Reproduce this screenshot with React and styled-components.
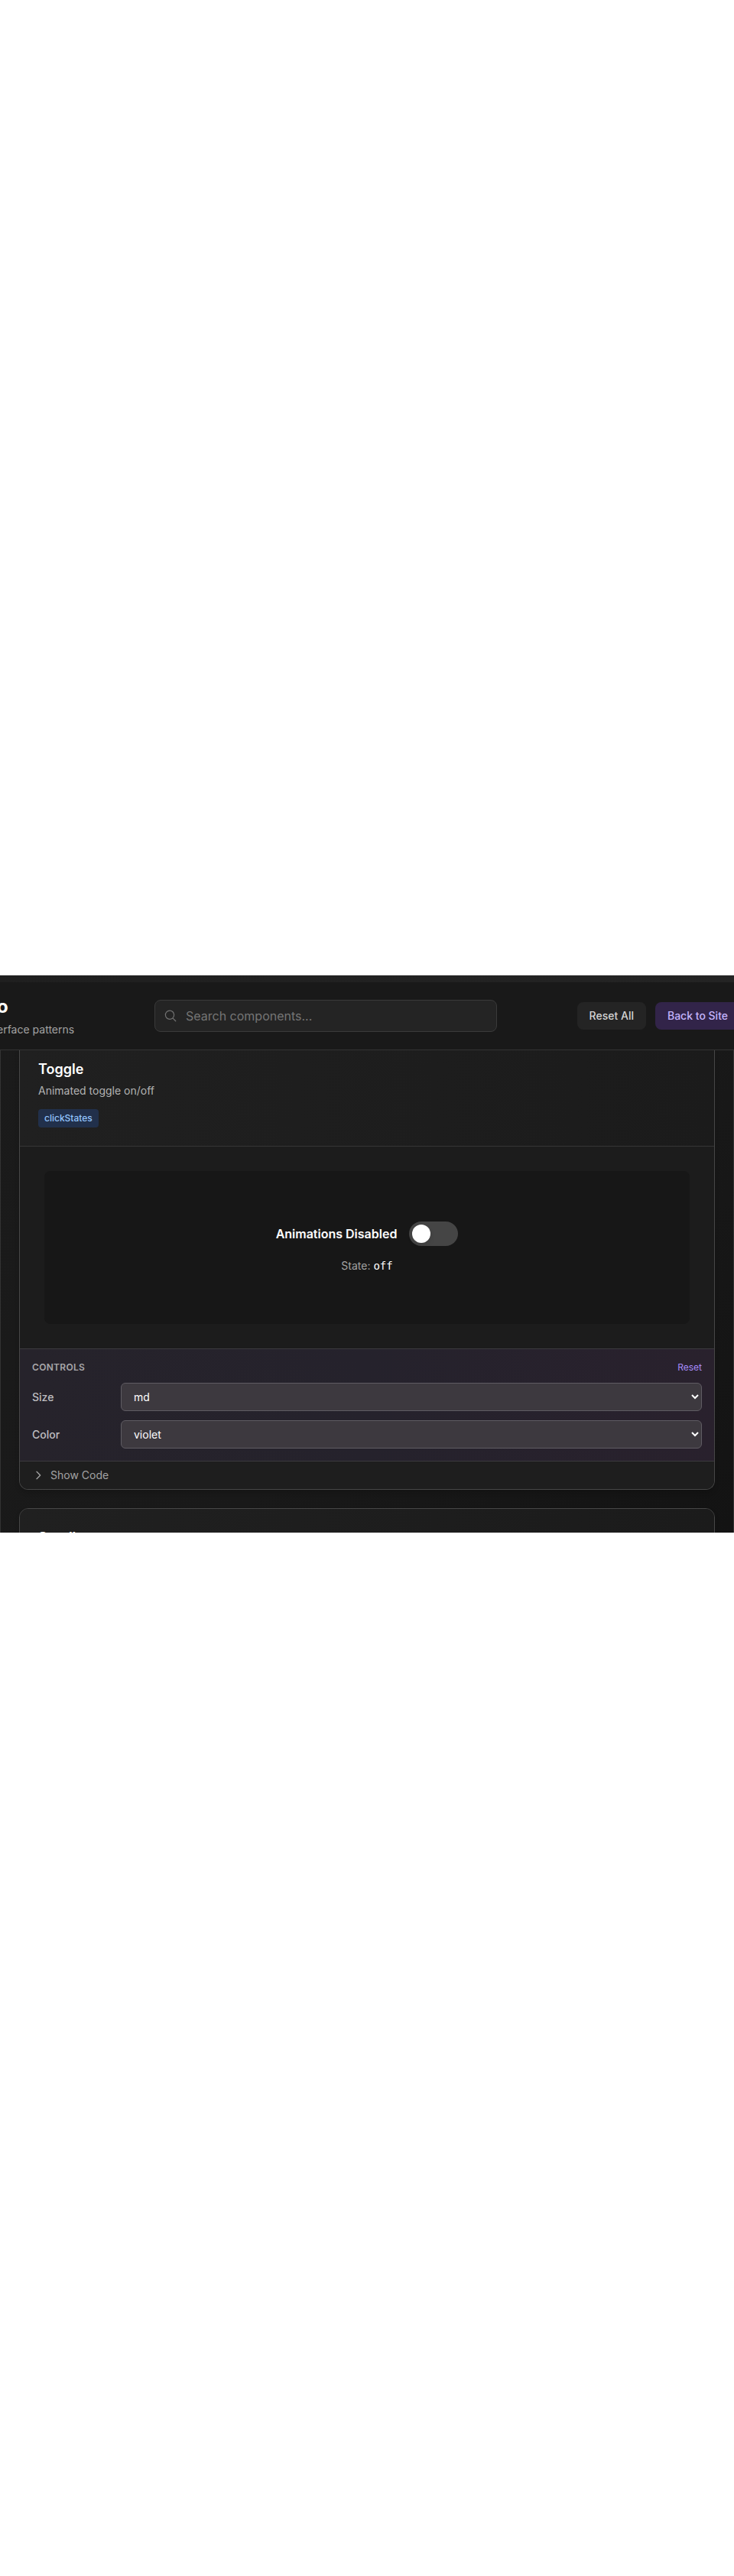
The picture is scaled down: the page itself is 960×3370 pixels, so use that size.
import React from "react";
import styled, { createGlobalStyle } from "styled-components";

const Global = createGlobalStyle`
  *, *::before, *::after { box-sizing: border-box; }
  html { background: #fff; }
  body { margin: 0; font-family: Inter, "Liberation Sans", sans-serif; font-size: 14px; line-height: 20px; color: #fff; }
  h1, h2, h3, p { margin: 0; }
  button, input, select { font-family: inherit; }
`;

const Page = styled.div`
  padding: 1276px 0 1365px;
`;

const Frame = styled.div`
  background: linear-gradient(135deg, #1b1b1b, #191919 60%, #131313);
`;

const Strip = styled.div`
  height: 9px;
  background: linear-gradient(90deg, #1f1f1f, #242424);
`;

const Header = styled.header`
  display: flex;
  align-items: center;
  height: 89px;
  overflow: hidden;
  background: #191919;
  border-bottom: 1px solid #333;
`;

const Brand = styled.div`
  flex: none;
  width: 206px;
  margin-left: -4px;
  white-space: nowrap;
`;

const BrandTitle = styled.h1`
  font-size: 24px;
  line-height: 32px;
  font-weight: 700;
`;

const BrandText = styled.p`
  margin-top: 4px;
  color: #a3a3a3;
`;

const Search = styled.label`
  position: relative;
  flex: 0 1 448px;
  color: #737373;
  svg { position: absolute; left: 12px; top: 12px; }
`;

const SearchInput = styled.input`
  display: block;
  width: 100%;
  height: 42px;
  padding: 0 16px 0 40px;
  border: 1px solid #3a3a3a;
  border-radius: 8px;
  background: #242424;
  color: #fff;
  font-size: 16px;
  &::placeholder { color: #757575; opacity: 1; }
`;

const Actions = styled.div`
  display: flex;
  flex: none;
  gap: 12px;
  margin-left: auto;
  margin-right: -8px;
`;

const Action = styled.button`
  height: 36px;
  padding: 0 16px;
  border: 0;
  border-radius: 8px;
  background: ${(p) => (p.$accent ? "#322449" : "#242424")};
  color: ${(p) => (p.$accent ? "#c4b5fd" : "#d4d4d4")};
  font-size: 14px;
  line-height: 20px;
  font-weight: 500;
  white-space: nowrap;
`;

const ActionLink = styled(Action)`
  display: block;
  padding: 8px 16px;
  text-decoration: none;
`;

const Main = styled.main`
  display: flex;
  flex-direction: column;
  gap: 24px;
  height: 631px;
  overflow: hidden;
  padding: 0 24px;
  border: solid #333;
  border-width: 0 1px;
`;

const Card = styled.article`
  flex: none;
  overflow: hidden;
  border: 1px solid #474747;
  border-top-width: ${(p) => (p.$cut ? "0" : "1px")};
  border-radius: ${(p) => (p.$cut ? "0 0 12px 12px" : "12px")};
  background: #1c1c1c;
  box-shadow: 0 4px 6px rgba(0, 0, 0, 0.15);
`;

const CardHead = styled.header`
  padding: ${(p) => (p.$cut ? "11px" : "24px")} 24px 24px;
  background: linear-gradient(90deg, #202020, #1b1b1b);
  border-bottom: 1px solid #363636;
`;

const CardTitle = styled.h2`
  font-size: 18px;
  line-height: 28px;
  font-weight: 600;
`;

const CardText = styled.p`
  margin-top: 4px;
  color: #b3b3b3;
`;

const Tag = styled.span`
  display: block;
  width: fit-content;
  margin-top: 14px;
  padding: 4px 8px;
  border-radius: 4px;
  background: #21304b;
  color: #93c5fd;
  font-size: 12px;
  line-height: 16px;
  font-weight: 500;
`;

const Preview = styled.section`
  padding: 32px;
`;

const Stage = styled.div`
  display: flex;
  flex-direction: column;
  align-items: center;
  justify-content: center;
  gap: 16px;
  height: 200px;
  border-radius: 8px;
  background: #171717;
`;

const SwitchRow = styled.label`
  display: flex;
  align-items: center;
  gap: 16px;
  font-size: 16px;
  line-height: 24px;
  font-weight: 600;
`;

const Switch = styled.input`
  appearance: none;
  display: flex;
  align-items: center;
  width: 64px;
  height: 32px;
  margin: 0;
  padding: 4px;
  border-radius: 16px;
  background: #454545;
  &::before {
    content: "";
    width: 24px;
    height: 24px;
    border-radius: 50%;
    background: #fff;
    box-shadow: 0 4px 6px rgba(0, 0, 0, 0.1);
  }
`;

const StateText = styled.p`
  color: #a3a3a3;
  code {
    font-family: "DejaVu Sans Mono", monospace;
    font-weight: 400;
    color: #fff;
  }
`;

const Controls = styled.section`
  display: flex;
  flex-direction: column;
  gap: 12px;
  padding: 16px;
  border: solid #3b3a3e;
  border-width: 1px 0;
  background: linear-gradient(90deg, #26232b, #25222c 50%, #29212d);
`;

const ControlsHead = styled.div`
  display: flex;
  justify-content: space-between;
  font-size: 12px;
  line-height: 16px;
`;

const ControlsTitle = styled.h3`
  color: #a8a7aa;
  font-size: 12px;
  line-height: 16px;
  font-weight: 600;
  letter-spacing: 0.3px;
  text-transform: uppercase;
`;

const ResetButton = styled.button`
  padding: 0;
  border: 0;
  background: none;
  color: #a78bfa;
  font-size: 12px;
  line-height: 16px;
`;

const Field = styled.div`
  display: flex;
  align-items: center;
  gap: 12px;
  label { width: 104px; color: #bfbec1; font-weight: 500; }
`;

const Select = styled.select`
  flex: 1;
  height: 37px;
  padding: 0 12px;
  border: 1px solid #5f5c63;
  border-radius: 6px;
  background: #3d393f;
  color: #fff;
  font-size: 14px;
`;

const CodeButton = styled.button`
  display: flex;
  align-items: center;
  gap: 8px;
  width: 100%;
  padding: 8px 16px;
  border: 0;
  background: #1e1e1e;
  color: #a3a3a3;
  font-size: 14px;
  line-height: 20px;
`;

const Icon = ({ size, d, width = 2 }) => (
  <svg width={size} height={size} viewBox="0 0 24 24" fill="none" stroke="currentColor" strokeWidth={width} strokeLinecap="round" strokeLinejoin="round" aria-hidden="true">
    <path d={d} />
  </svg>
);

const fields = [
  { id: "size", label: "Size", options: ["md", "sm", "lg"] },
  { id: "color", label: "Color", options: ["violet", "blue", "green"] },
];

export default function App() {
  return (
    <>
      <Global />
      <Page>
        <Frame>
          <Strip />
          <Header>
            <Brand>
              <BrandTitle>o</BrandTitle>
              <BrandText>erface patterns</BrandText>
            </Brand>
            <Search>
              <Icon size={18} width={1.6} d="m21 21-5.2-5.2M15.8 15.8A7.5 7.5 0 1 0 5.2 5.2a7.5 7.5 0 0 0 10.6 10.6Z" />
              <SearchInput type="text" placeholder="Search components..." aria-label="Search components" />
            </Search>
            <Actions>
              <Action type="button">Reset All</Action>
              <ActionLink as="a" href="#" $accent>Back to Site</ActionLink>
            </Actions>
          </Header>
          <Main>
            <Card $cut>
              <CardHead $cut>
                <CardTitle>Toggle</CardTitle>
                <CardText>Animated toggle on/off</CardText>
                <Tag>clickStates</Tag>
              </CardHead>
              <Preview>
                <Stage>
                  <SwitchRow>
                    Animations Disabled
                    <Switch type="checkbox" role="switch" />
                  </SwitchRow>
                  <StateText>State: <code>off</code></StateText>
                </Stage>
              </Preview>
              <Controls>
                <ControlsHead>
                  <ControlsTitle>Controls</ControlsTitle>
                  <ResetButton type="button">Reset</ResetButton>
                </ControlsHead>
                {fields.map((f) => (
                  <Field key={f.id}>
                    <label htmlFor={f.id}>{f.label}</label>
                    <Select id={f.id}>
                      {f.options.map((o) => <option key={o}>{o}</option>)}
                    </Select>
                  </Field>
                ))}
              </Controls>
              <CodeButton type="button">
                <Icon size={16} d="M9 5l7 7-7 7" />
                Show Code
              </CodeButton>
            </Card>
            <Card>
              <CardHead>
                <CardTitle>Scroll</CardTitle>
              </CardHead>
            </Card>
          </Main>
        </Frame>
      </Page>
    </>
  );
}
